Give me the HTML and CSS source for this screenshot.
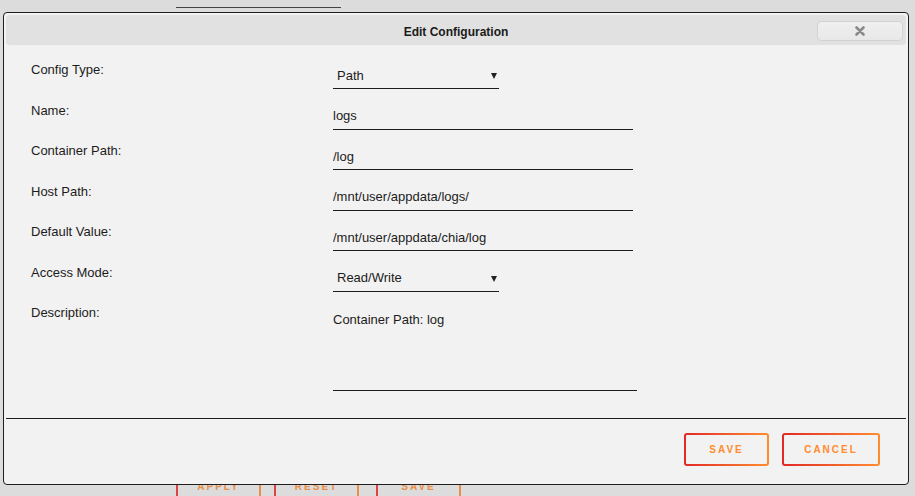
FILE: index.html
```html
<!DOCTYPE html>
<html lang="en">
<head>
    <meta charset="UTF-8">
    <meta name="viewport" content="width=device-width, initial-scale=1.0">
    <title>Edit Configuration</title>
    <link rel="stylesheet" href="styles.css">
</head>
<body>
    <div class="page">
        <div class="page-line"></div>
        <div class="page-buttons">
            <button class="page-btn">APPLY</button>
            <button class="page-btn">RESET</button>
            <button class="page-btn page-btn-last">SAVE</button>
        </div>
    </div>

    <div class="dialog">
        <div class="titlebar">
            <span class="title">Edit Configuration</span>
            <button class="close-btn" aria-label="Close">
                <svg width="10" height="10" viewBox="0 0 10 10">
                    <path d="M1.5 1.5 L8.5 8.5 M8.5 1.5 L1.5 8.5" stroke="#8a8a8a" stroke-width="2.6" stroke-linecap="round"/>
                </svg>
            </button>
        </div>

        <div class="form">
            <div class="row">
                <label>Config Type:</label>
                <div class="select">
                    <select>
                        <option>Path</option>
                        <option>Port</option>
                        <option>Variable</option>
                        <option>Label</option>
                        <option>Device</option>
                    </select>
                </div>
            </div>
            <div class="row">
                <label>Name:</label>
                <input type="text" value="logs">
            </div>
            <div class="row">
                <label>Container Path:</label>
                <input type="text" value="/log">
            </div>
            <div class="row">
                <label>Host Path:</label>
                <input type="text" value="/mnt/user/appdata/logs/">
            </div>
            <div class="row">
                <label>Default Value:</label>
                <input type="text" value="/mnt/user/appdata/chia/log">
            </div>
            <div class="row">
                <label>Access Mode:</label>
                <div class="select">
                    <select>
                        <option>Read/Write</option>
                        <option>Read Only</option>
                    </select>
                </div>
            </div>
            <div class="row row-desc">
                <label>Description:</label>
                <textarea>Container Path: log</textarea>
            </div>
        </div>

        <div class="footer">
            <button class="btn btn-save">SAVE</button>
            <button class="btn btn-cancel">CANCEL</button>
        </div>
    </div>
</body>
</html>
```

FILE: styles.css
```css
body {
    margin: 0;
    background-color: #dcdcdc;
    color: #1c1c1c;
    font-family: "Liberation Sans", Arial, sans-serif;
    font-size: 13px;
    height: 496px;
    overflow: hidden;
}

button {
    font-family: inherit;
    cursor: pointer;
}

/* page behind the dialog */
.page {
    padding: 7px 0 0 176px;
}

.page-line {
    width: 165px;
    border-bottom: 1px solid #444;
}

.page-buttons {
    display: flex;
    margin-top: 462px;
}

.page-btn {
    width: 85px;
    height: 33px;
    margin-right: 13px;
    background: none;
    border: none;
    border-left: 2px solid #d94545;
    border-right: 2px solid #e8904a;
    color: #e8904a;
    font-size: 10px;
    font-weight: bold;
    letter-spacing: 2px;
}

.page-btn-last {
    margin-left: 4px;
}

/* dialog */
.dialog {
    position: absolute;
    left: 3px;
    top: 12px;
    width: 906px;
    box-sizing: border-box;
    padding: 2px;
    background-color: #f2f2f2;
    border: 1px solid #1e1e1e;
    border-radius: 4px;
}

.titlebar {
    position: relative;
    height: 30px;
    display: flex;
    align-items: center;
    justify-content: center;
    background-color: #e1e1e1;
    border-radius: 4px;
}

.title {
    padding-top: 3px;
    font-size: 12px;
    font-weight: bold;
    color: #1a1a1a;
}

.close-btn {
    position: absolute;
    right: 3px;
    top: 6px;
    width: 86px;
    height: 20px;
    padding: 0;
    display: flex;
    align-items: center;
    justify-content: center;
    border: 1px solid #d2d2d2;
    border-radius: 4px;
    background: linear-gradient(#efefef, #e8e8e8);
}

.form {
    padding: 13px 0 0 25px;
}

.row {
    display: flex;
    height: 40.5px;
}

.row label {
    width: 302px;
    line-height: 24px;
}

.row input,
.select select,
.row textarea {
    font-family: inherit;
    font-size: 13px;
    color: #1c1c1c;
    background: transparent;
    border: none;
    border-bottom: 1px solid #1e1e1e;
    border-radius: 0;
    outline: none;
}

.row input {
    box-sizing: border-box;
    width: 300px;
    height: 27px;
    margin-top: 4px;
    padding: 0;
}

.select {
    position: relative;
    margin-top: 4px;
}

.select select {
    appearance: none;
    -webkit-appearance: none;
    box-sizing: border-box;
    width: 166px;
    height: 27px;
    padding: 0 0 0 4px;
}

.select::after {
    content: "";
    position: absolute;
    right: 2px;
    top: 11px;
    border-left: 3px solid transparent;
    border-right: 3px solid transparent;
    border-top: 6px solid #222;
    pointer-events: none;
}

.row-desc {
    height: auto;
}

.row textarea {
    box-sizing: border-box;
    width: 304px;
    height: 86px;
    margin-top: 4px;
    padding: 7px 0 0 0;
    line-height: 16px;
    resize: none;
}

.footer {
    margin-top: 27px;
    border-top: 1px solid #1e1e1e;
    padding: 14px 26px 16px 0;
    display: flex;
    justify-content: flex-end;
    gap: 13px;
}

.btn {
    height: 33px;
    padding: 0;
    border: 2px solid transparent;
    border-radius: 3px;
    background:
        linear-gradient(#f2f2f2, #f2f2f2) padding-box,
        linear-gradient(90deg, #e22828, #ff8c2f) border-box;
    color: #ff8c2f;
    font-size: 10px;
    font-weight: bold;
    letter-spacing: 2px;
}

.btn-save {
    width: 85px;
}

.btn-cancel {
    width: 98px;
}
```
